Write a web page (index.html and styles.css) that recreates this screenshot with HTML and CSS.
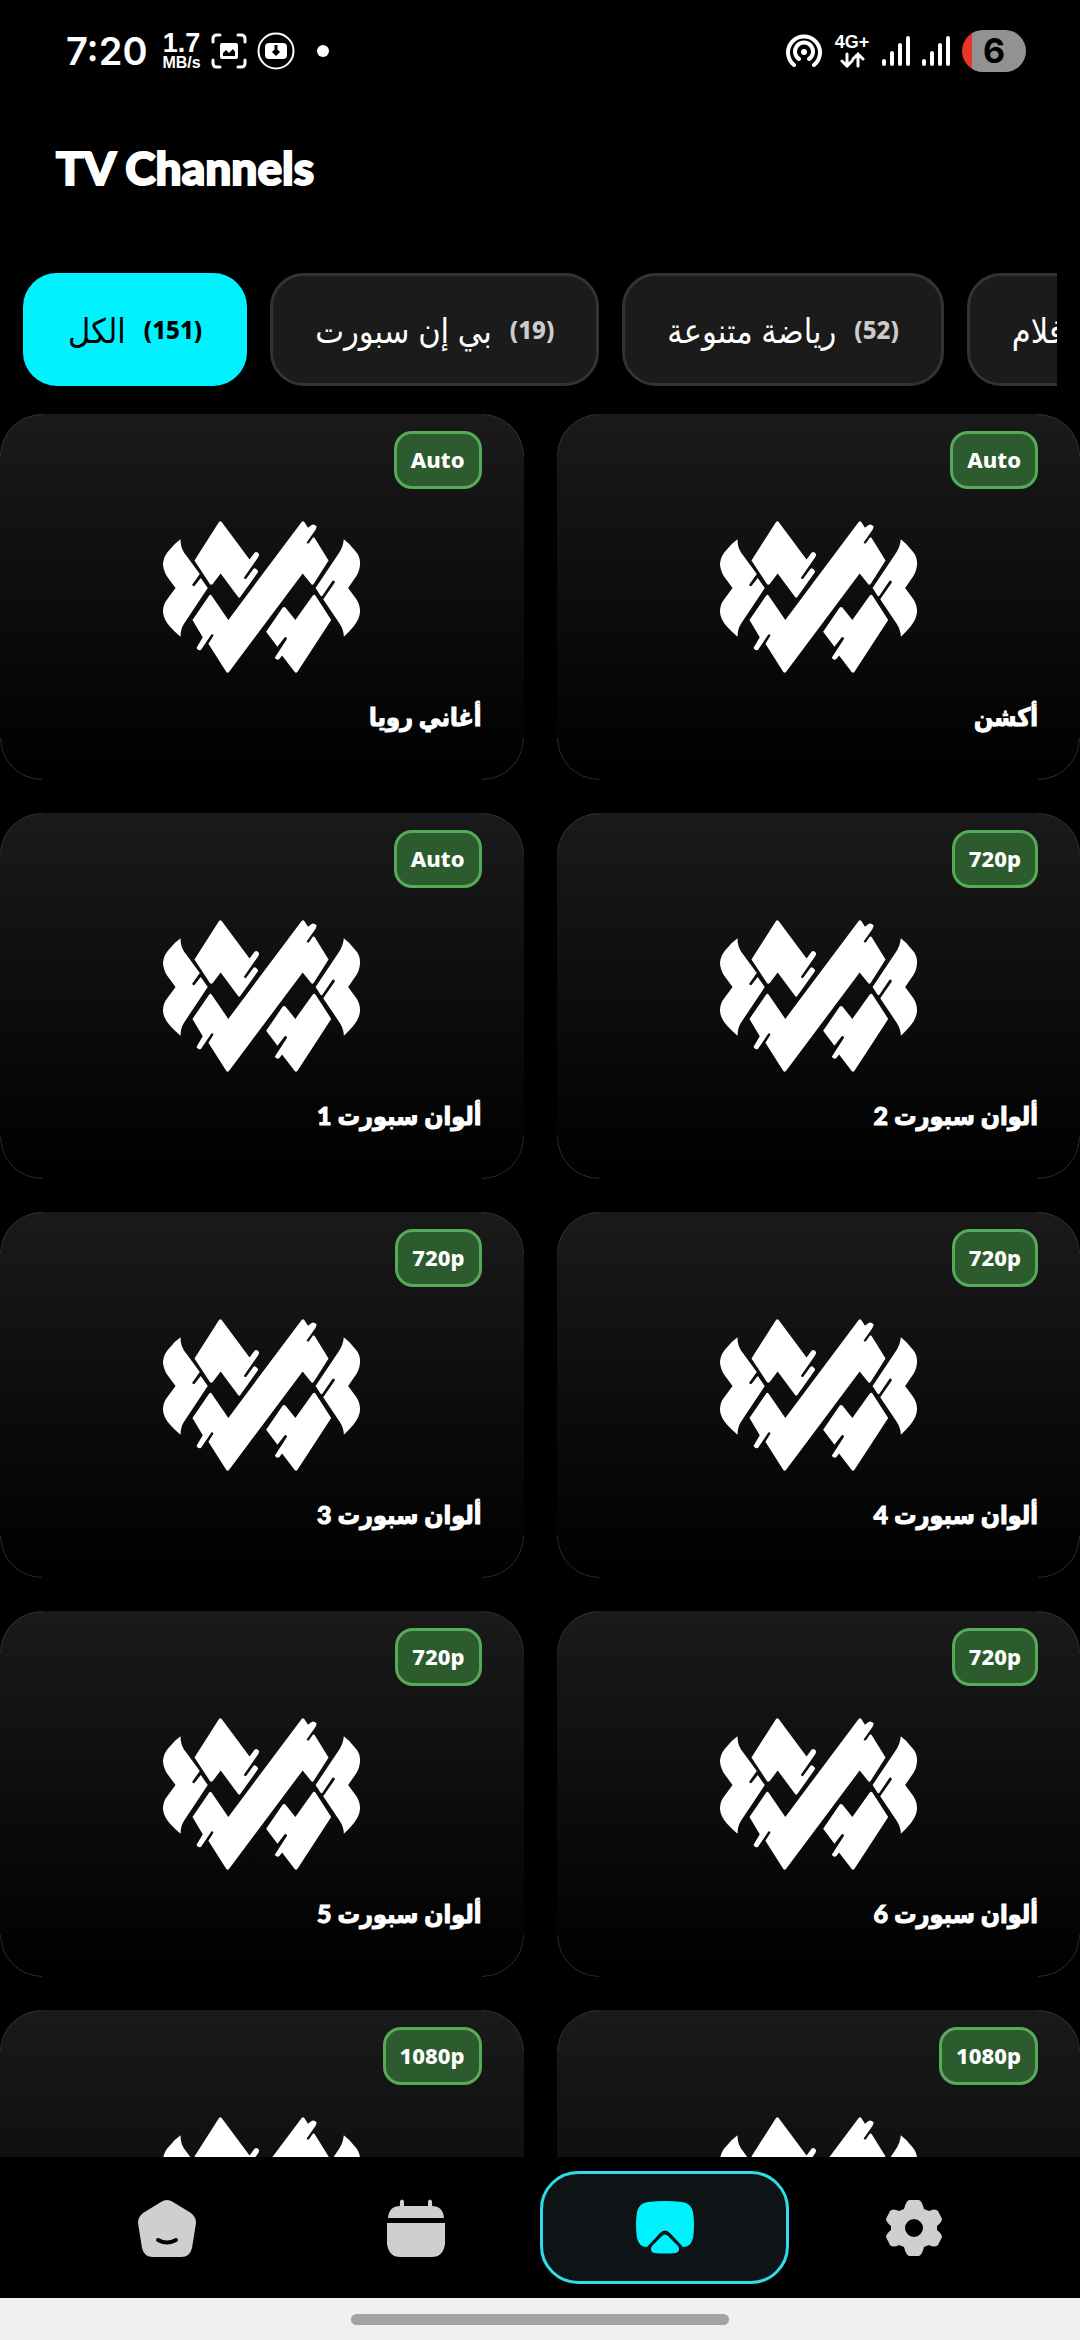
FILE: index.html
```html
<!DOCTYPE html>
<html lang="en">
<head>
<meta charset="utf-8">
<title>TV Channels</title>
<meta name="viewport" content="width=device-width, initial-scale=1">
<link rel="stylesheet" href="styles.css">
</head>
<body>
<svg class="defs" aria-hidden="true">
  <symbol id="logo" viewBox="66 62 596 458">
    <path d="M120 117C120 140 127 152 135 163L178 222L155 254Q157 260 162 258L181 234L202 264L130 372Q120 388 120 411Q100 394 88 380Q68 358 67 335Q68 312 80 298L105 264L80 230Q68 212 67 190Q70 165 88 148Q104 128 120 117Z"/>
    <path d="M236 65Q240 60 244 65L328 178L343 158Q350 152 356 161Q358 165 354 171L311 233Q313 239 318 236L340 206Q345 201 353 212Q355 216 350 221L300 291Q297 296 293 290L241 220L217 252Q212 257 208 251L162 181Z"/>
    <path d="M485 65Q489 60 493 65L504 82L514 75Q520 69 530 78Q530 82 527 88L500 127Q502 132 507 129L519 112Q523 110 526 116L566 181L522 250Q517 257 513 251L488 220L266 517Q262 522 258 517L204 432L219 408Q219 401 213 404L182 450Q175 455 168 445L187 412L156 360L206 287Q210 282 214 287L264 360Z"/>
    <path d="M428 323Q432 319 436 323L466 360L518 287Q523 282 527 287L574 360L472 517Q468 522 464 517L426 467L418 478Q411 484 404 474L441 417Q440 410 434 412L412 441L378 396Z"/>
    <path d="M612 117Q630 130 646 152Q661 168 661 190Q660 212 650 228L625 264L650 298Q661 315 661 335Q660 357 642 379Q628 396 612 411Q612 390 600 372L550 298L585 247Q585 240 578 242L547 288Q544 290 541 286L527 264L595 162Q610 142 612 117Z"/>
  </symbol>
</svg>

<header class="status">
  <div class="status-side">
    <span class="clock">7:20</span>
    <span class="speed"><b>1.7</b><small>MB/s</small></span>
    <svg class="icon-36" viewBox="0 0 36 36" fill="none" stroke="#fff" stroke-width="3" stroke-linecap="round"><path d="M2 9V6Q2 2 6 2H9M27 2H30Q34 2 34 6V9M34 27V30Q34 34 30 34H27M9 34H6Q2 34 2 30V27"/><rect x="9" y="10" width="18" height="16" rx="2" fill="#fff" stroke="none"/><path d="M12 23V20L15 17L18 20L22 16L24 19V23Z" fill="#000" stroke="none"/></svg>
    <svg class="icon-38" viewBox="0 0 38 38"><circle cx="19" cy="19" r="17.500" fill="none" stroke="#fff" stroke-width="2"/><rect x="8" y="11" width="22" height="16" rx="4" fill="#fff"/><path d="M19 13V22M16 19L19 22L22 19" fill="none" stroke="#000" stroke-width="3"/></svg>
    <span class="dot"></span>
  </div>
  <div class="status-side status-right">
    <svg class="icon-36" viewBox="0 0 36 36" fill="none" stroke="#fff" stroke-width="4" stroke-linecap="round"><path d="M8 32A16 16 0 1 1 28 32M13 26A9 9 0 1 1 23 26"/><circle cx="18" cy="19" r="3" fill="#fff" stroke="none"/></svg>
    <span class="network"><b>4G+</b><svg viewBox="0 0 26 16" fill="none" stroke="#fff" stroke-width="3" stroke-linecap="round"><path d="M8 2V14M3 9L8 14L13 9M19 14V2M14 7L19 2L24 7"/></svg></span>
    <svg class="signal" viewBox="0 0 28 30" fill="none" stroke="#fff" stroke-width="4" stroke-linecap="round"><path d="M2 25V28M10 17V28M18 9V28M26 2V28"/></svg>
    <svg class="signal" viewBox="0 0 28 30" fill="none" stroke="#fff" stroke-width="4" stroke-linecap="round"><path d="M2 25V28M10 17V28M18 9V28M26 2V28"/></svg>
    <span class="battery">6</span>
  </div>
</header>

<h1 class="title">TV Channels</h1>

<div class="chips">
  <button class="chip chip-active"><span lang="ar">الكل</span><b>(151)</b></button>
  <button class="chip"><span lang="ar">بي إن سبورت</span><b>(19)</b></button>
  <button class="chip"><span lang="ar">رياضة متنوعة</span><b>(52)</b></button>
  <button class="chip"><span lang="ar">أفلام</span></button>
</div>

<main class="channels">
  <article class="card"><span class="badge">Auto</span><svg class="logo"><use href="#logo"/></svg><h2 class="name" lang="ar" dir="rtl">أغاني رويا</h2></article>
  <article class="card"><span class="badge">Auto</span><svg class="logo"><use href="#logo"/></svg><h2 class="name" lang="ar" dir="rtl">أكشن</h2></article>
  <article class="card"><span class="badge">Auto</span><svg class="logo"><use href="#logo"/></svg><h2 class="name" lang="ar" dir="rtl">ألوان سبورت 1</h2></article>
  <article class="card"><span class="badge">720p</span><svg class="logo"><use href="#logo"/></svg><h2 class="name" lang="ar" dir="rtl">ألوان سبورت 2</h2></article>
  <article class="card"><span class="badge">720p</span><svg class="logo"><use href="#logo"/></svg><h2 class="name" lang="ar" dir="rtl">ألوان سبورت 3</h2></article>
  <article class="card"><span class="badge">720p</span><svg class="logo"><use href="#logo"/></svg><h2 class="name" lang="ar" dir="rtl">ألوان سبورت 4</h2></article>
  <article class="card"><span class="badge">720p</span><svg class="logo"><use href="#logo"/></svg><h2 class="name" lang="ar" dir="rtl">ألوان سبورت 5</h2></article>
  <article class="card"><span class="badge">720p</span><svg class="logo"><use href="#logo"/></svg><h2 class="name" lang="ar" dir="rtl">ألوان سبورت 6</h2></article>
  <article class="card"><span class="badge">1080p</span><svg class="logo"><use href="#logo"/></svg></article>
  <article class="card"><span class="badge">1080p</span><svg class="logo"><use href="#logo"/></svg></article>
</main>

<nav class="tabs">
  <button class="tab" aria-label="Home"><svg viewBox="0 0 58 58"><path d="M23 3Q29 -1 35 3L53 14Q58 18 58 24L54 49Q52 58 43 58H15Q6 58 4 49L0 24Q0 18 5 14Z" fill="#cfcfcf"/><path d="M20 41Q29 46 38 41" fill="none" stroke="#000" stroke-width="4" stroke-linecap="round"/></svg></button>
  <button class="tab" aria-label="Schedule"><svg viewBox="0 0 58 58" fill="#cfcfcf"><path d="M1 19Q2 7 13 7V2Q15 -1 17 2V7H41V2Q43 -1 45 2V7Q56 7 57 19ZM0 24H58V45Q56 58 45 58H13Q2 58 0 45Z"/></svg></button>
  <button class="tab tab-active" aria-label="TV"><svg viewBox="0 0 58 58"><path d="M12 3Q29 1 46 3Q55 4 57 13Q59 26 57 39Q55 48 47 48L34 34Q29 29 24 34L11 48Q3 48 1 39Q-1 26 1 13Q3 4 12 3Z" fill="#00f2ff"/><path d="M26 37Q29 34 32 37L42 47Q45 52 40 54Q29 55 18 54Q13 52 16 47Z" fill="#00f2ff"/></svg></button>
  <button class="tab" aria-label="Settings"><svg viewBox="0 0 58 58"><path fill-rule="evenodd" fill="#cfcfcf" d="M24 1H34Q37 2 39 10L44 12Q50 9 53 12L57 20Q57 23 52 27V31Q57 35 57 38L53 46Q50 49 44 46L39 48Q37 56 34 57H24Q21 56 19 48L14 46Q8 49 5 46L1 38Q1 35 6 31V27Q1 23 1 20L5 12Q8 9 14 12L19 10Q21 2 24 1ZM29 20A9 9 0 1 0 29 38A9 9 0 1 0 29 20Z"/></svg></button>
</nav>

<footer class="gesture"><span class="handle"></span></footer>
</body>
</html>
```

FILE: styles.css
```css
* {
  box-sizing: border-box;
}

body {
  margin: 0;
  height: 100vh;
  display: flex;
  flex-direction: column;
  overflow: hidden;
  background: #000;
  color: #fff;
  font-family: Lato, "DejaVu Sans Condensed", "DejaVu Sans", sans-serif;
}

button {
  font: inherit;
  color: inherit;
  background: none;
  border: 0;
  padding: 0;
}

.defs {
  position: absolute;
  width: 0;
  height: 0;
}

/* Status bar */
.status {
  flex: none;
  display: flex;
  justify-content: space-between;
  height: 102px;
  padding: 0 54px 0 66px;
  font-family: Inter, sans-serif;
}

.status-side {
  display: flex;
  align-items: center;
  gap: 10px;
}

.status-right {
  gap: 12px;
}

.clock {
  font-size: 38px;
  font-weight: 600;
  margin-right: 5px;
}

.speed,
.network {
  display: flex;
  flex-direction: column;
  align-items: center;
  font-family: "Liberation Sans", sans-serif;
}

.speed b {
  font-size: 27px;
  line-height: 24px;
}

.speed small {
  font-size: 16px;
  font-weight: 700;
  line-height: 16px;
}

.network {
  width: 36px;
  gap: 2px;
}

.network b {
  font-size: 18px;
  line-height: 16px;
}

.network svg {
  width: 26px;
  height: 16px;
}

.icon-36 {
  width: 36px;
  height: 36px;
}

.icon-38 {
  width: 38px;
  height: 38px;
}

.dot {
  width: 12px;
  height: 12px;
  margin-left: 12px;
  border-radius: 50%;
  background: #fff;
}

.signal {
  width: 28px;
  height: 30px;
}

.battery {
  width: 64px;
  height: 42px;
  border-radius: 21px;
  background: linear-gradient(90deg, #e93428 10px, #929292 10px);
  color: #000;
  font-size: 34px;
  font-weight: 700;
  line-height: 42px;
  text-align: center;
}

/* Page heading */
.title {
  flex: none;
  margin: 0;
  padding: 34px 56px 73px;
  font-size: 46px;
  font-weight: 900;
  line-height: 64px;
  -webkit-text-stroke: 2px #fff;
}

/* Category filter */
.chips {
  flex: none;
  display: flex;
  gap: 23px;
  margin: 0 23px;
  overflow: hidden;
}

.chip {
  flex: none;
  display: flex;
  align-items: center;
  gap: 18px;
  height: 113px;
  padding: 0 42px;
  border: 3px solid #333;
  border-radius: 34px;
  background: #1b1b1b;
  font-size: 34px;
}

.chip b {
  color: #ccc;
  font-family: "Noto Sans", sans-serif;
  font-size: 24px;
  font-weight: 800;
}

.chip-active {
  border-color: #00f2ff;
  background: #00f2ff;
  color: #000;
}

.chip-active b {
  color: #000;
}

/* Channel grid */
.channels {
  flex: 1;
  min-height: 0;
  display: grid;
  grid-template-columns: 1fr 1fr;
  grid-auto-rows: 366px;
  gap: 33px;
  margin-top: 28px;
  overflow: hidden;
}

.card {
  position: relative;
  display: flex;
  flex-direction: column;
  align-items: center;
  padding: 17px 42px;
  border-radius: 42px;
  background: linear-gradient(#1a1a1a, #000);
}

/* Hairline that shows on the rounded corners only */
.card::after {
  content: "";
  position: absolute;
  inset: 0;
  border: 1px solid #333;
  border-radius: 42px;
  mask:
    linear-gradient(#000 0 0) 0 0 / 42px 42px no-repeat,
    linear-gradient(#000 0 0) 100% 0 / 42px 42px no-repeat,
    linear-gradient(#000 0 0) 0 100% / 42px 42px no-repeat,
    linear-gradient(#000 0 0) 100% 100% / 42px 42px no-repeat;
}

.badge {
  align-self: flex-end;
  height: 58px;
  padding: 0 14px;
  border: 3px solid #55ab58;
  border-radius: 18px;
  background: #2c5c2e;
  font-family: "Noto Sans", sans-serif;
  font-size: 22px;
  font-weight: 800;
  line-height: 50px;
}

.logo {
  width: 199px;
  height: 152px;
  margin-top: 32px;
  fill: #fff;
}

.name {
  align-self: stretch;
  margin: 20px 0 0;
  font-size: 25px;
  font-weight: 900;
  line-height: 46px;
  -webkit-text-stroke: 1px #fff;
}

/* Bottom navigation */
.tabs {
  flex: none;
  display: flex;
  padding: 14px 42px;
}

.tab {
  flex: 1;
  display: flex;
  align-items: center;
  justify-content: center;
  height: 113px;
  border: 3px solid transparent;
  border-radius: 38px;
}

.tab-active {
  border-color: #2fdce8;
  background: #0e1316;
}

.tab svg {
  width: 58px;
  height: 58px;
}

.gesture {
  flex: none;
  display: flex;
  justify-content: center;
  height: 42px;
  padding-top: 16px;
  background: #f0f0f0;
}

.handle {
  width: 35%;
  height: 11px;
  border-radius: 6px;
  background: #a3a3a3;
}
```
